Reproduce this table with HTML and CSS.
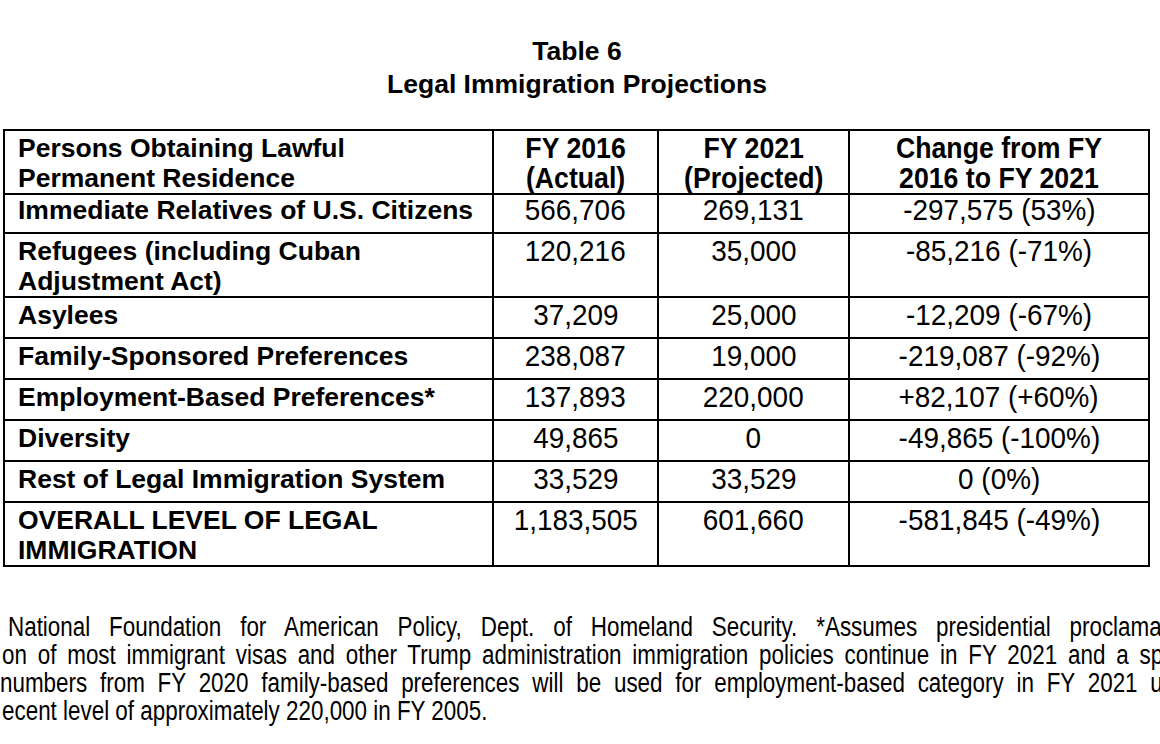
FILE: index.html
```html
<!DOCTYPE html>
<html lang="en">
<head>
<meta charset="utf-8">
<title>Table 6 - Legal Immigration Projections</title>
<link rel="stylesheet" href="styles.css">
</head>
<body>
<div class="page">
  <div class="doc">
    <h1 class="title"><span>Table 6</span><span>Legal Immigration Projections</span></h1>
    <table class="data">
      <colgroup>
        <col class="c1"><col class="c2"><col class="c3"><col class="c4">
      </colgroup>
      <thead>
        <tr>
          <th class="label">Persons Obtaining Lawful<br>Permanent Residence</th>
          <th class="num head"><span class="nw">FY 2016<br>(Actual)</span></th>
          <th class="num head"><span class="nw">FY 2021<br>(Projected)</span></th>
          <th class="num head"><span class="nw">Change from FY<br>2016 to FY 2021</span></th>
        </tr>
      </thead>
      <tbody>
        <tr class="short">
          <td class="label">Immediate Relatives of U.S. Citizens</td>
          <td class="num"><span class="nw">566,706</span></td>
          <td class="num"><span class="nw">269,131</span></td>
          <td class="num"><span class="nw">-297,575 (53%)</span></td>
        </tr>
        <tr>
          <td class="label">Refugees (including Cuban<br>Adjustment Act)</td>
          <td class="num"><span class="nw">120,216</span></td>
          <td class="num"><span class="nw">35,000</span></td>
          <td class="num"><span class="nw">-85,216 (-71%)</span></td>
        </tr>
        <tr>
          <td class="label">Asylees</td>
          <td class="num"><span class="nw">37,209</span></td>
          <td class="num"><span class="nw">25,000</span></td>
          <td class="num"><span class="nw">-12,209 (-67%)</span></td>
        </tr>
        <tr>
          <td class="label">Family-Sponsored Preferences</td>
          <td class="num"><span class="nw">238,087</span></td>
          <td class="num"><span class="nw">19,000</span></td>
          <td class="num"><span class="nw">-219,087 (-92%)</span></td>
        </tr>
        <tr>
          <td class="label">Employment-Based Preferences*</td>
          <td class="num"><span class="nw">137,893</span></td>
          <td class="num"><span class="nw">220,000</span></td>
          <td class="num"><span class="nw">+82,107 (+60%)</span></td>
        </tr>
        <tr>
          <td class="label">Diversity</td>
          <td class="num"><span class="nw">49,865</span></td>
          <td class="num"><span class="nw">0</span></td>
          <td class="num"><span class="nw">-49,865 (-100%)</span></td>
        </tr>
        <tr>
          <td class="label">Rest of Legal Immigration System</td>
          <td class="num"><span class="nw">33,529</span></td>
          <td class="num"><span class="nw">33,529</span></td>
          <td class="num"><span class="nw">0 (0%)</span></td>
        </tr>
        <tr>
          <td class="label">OVERALL LEVEL OF LEGAL<br>IMMIGRATION</td>
          <td class="num"><span class="nw">1,183,505</span></td>
          <td class="num"><span class="nw">601,660</span></td>
          <td class="num"><span class="nw">-581,845 (-49%)</span></td>
        </tr>
      </tbody>
    </table>
  </div>
  <div class="note">
    <div class="line just l1">National Foundation for American Policy, Dept. of Homeland Security. *Assumes presidential proclama</div>
    <div class="line just l2">on of most immigrant visas and other Trump administration immigration policies continue in FY 2021 and a sp</div>
    <div class="line just l3">numbers from FY 2020 family-based preferences will be used for employment-based category in FY 2021 u</div>
    <div class="line l4">ecent level of approximately 220,000 in FY 2005.</div>
  </div>
</div>
</body>
</html>
```
FILE: styles.css
```css
html, body {
  margin: 0;
  padding: 0;
  background: #fff;
}
body {
  color: #000;
  font-family: "Liberation Sans", Arial, sans-serif;
}
.page {
  width: 1160px;
  height: 744px;
  overflow: hidden;
}
.doc {
  width: 1148px;
  margin-left: 3px;
}
.title {
  margin: 0;
  padding-top: 35px;
  display: flex;
  flex-direction: column;
  align-items: center;
  font-size: 26.5px;
  line-height: 33px;
  font-weight: 700;
}
.data {
  margin-top: 28px;
  border-collapse: collapse;
  table-layout: fixed;
  width: 1147px;
}
.c1 { width: 489px; }
.c2 { width: 165px; }
.c3 { width: 191px; }
.c4 { width: 300px; }
.data th, .data td {
  border: 2px solid #000;
  padding: 2px 0 0 0;
  vertical-align: top;
  height: 37px;
  font-size: 26.5px;
  line-height: 30px;
  white-space: nowrap;
}
.data .short td {
  padding-top: 0;
  height: 37px;
}
.data .label {
  text-align: left;
  padding-left: 13px;
  font-weight: 700;
}
.data .num {
  text-align: center;
  font-weight: 400;
  font-size: 30px;
}
.data .head {
  font-weight: 700;
  font-size: 29px;
}
.nw {
  display: inline-block;
  transform: scaleX(0.93);
  text-align: center;
}
.head .nw {
  transform: scaleX(0.92);
}
.note {
  margin-top: 46px;
  font-size: 27px;
  line-height: 28px;
}
.line {
  height: 28px;
  white-space: nowrap;
  transform: scaleX(0.83);
  transform-origin: 0 0;
}
.just {
  white-space: normal;
  text-align: justify;
  text-align-last: justify;
}
.l1 { margin-left: 8px; width: 1390px; }
.l2 { margin-left: 2px; width: 1399px; }
.l3 { margin-left: 0; width: 1401px; }
.l4 { margin-left: 2px; }
```
